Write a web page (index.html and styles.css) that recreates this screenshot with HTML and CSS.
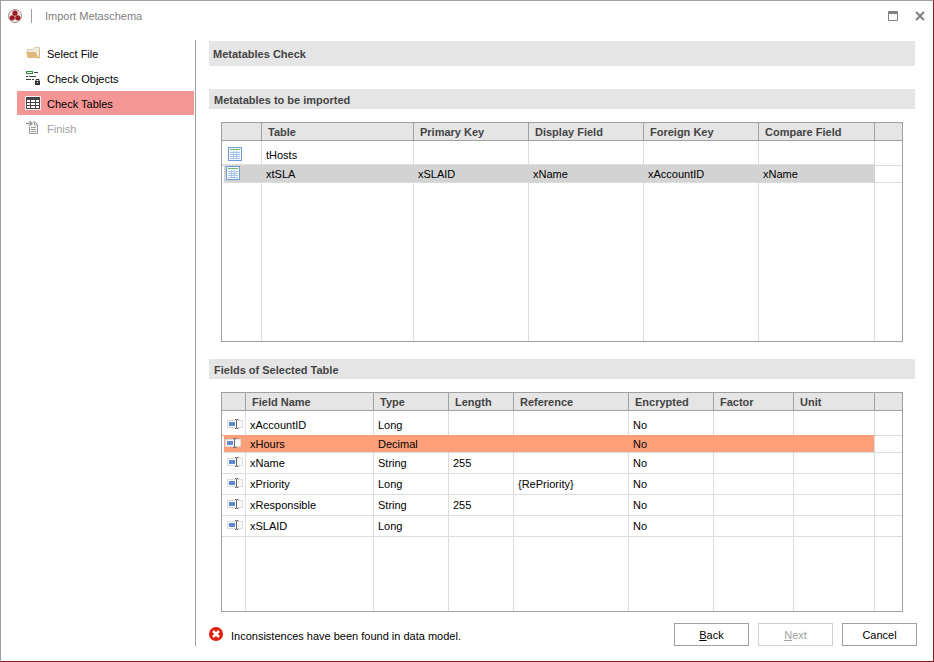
FILE: index.html
```
<!DOCTYPE html>
<html lang="en">
    <head>
        <meta charset="utf-8">
        <title>Import Metaschema</title>
        <link rel="stylesheet" href="styles.css">
    </head>
    <body>
        <!-- shared icons -->
        <svg class="sprite" aria-hidden="true">
            <symbol id="icon-table" viewBox="0 0 14 14">
                <rect x=".5" y=".5" width="13" height="13" fill="#f4f9ff" stroke="#6f9ad6"/>
                <path d="M2 2.5h10" stroke="#70b870"/>
                <path d="M2 5.5h10M2 7.5h10M2 9.500h10M2 11.500h10M5.5 4v8M8.500 4v8" stroke="#a9c4ec"/>
            </symbol>
            <symbol id="icon-field" viewBox="0 0 16 10">
                <rect x=".5" y="1.5" width="15" height="7" fill="#fafafa" stroke="#dcdcdc"/>
                <rect x="2" y="3" width="6" height="4" fill="#5f8bd0"/>
                <path d="M8 .5h1.5M10 .5h1.5M9.5 1v8M8 9.5h1.5M10 9.5h1.5" stroke="#666"/>
            </symbol>
        </svg>
        <div class="window">
            <header class="titlebar">
                <svg class="logo" viewBox="0 0 14 14" aria-hidden="true">
                    <circle cx="7" cy="7" r="6.5" fill="#f2eaea" stroke="#a08c8c"/>
                    <circle cx="7" cy="4.200" r="2.600" fill="#9c1c24"/>
                    <circle cx="4.2" cy="8.8" r="2.600" fill="#9c1c24"/>
                    <circle cx="9.8" cy="8.8" r="2.600" fill="#9c1c24"/>
                </svg>
                <h1>Import Metaschema</h1>
                <button class="win-btn" aria-label="Maximize">
                    <svg width="10" height="10" viewBox="0 0 10 10"><path d="M.5.5h9v9h-9zM0 1.5h10M0 2.500h10" fill="none" stroke="#808080"/></svg>
                </button>
                <button class="win-btn" aria-label="Close">
                    <svg width="10" height="10" viewBox="0 0 10 10"><path d="M1 1l8 8M9 1l-8 8" stroke="#808080" stroke-width="2"/></svg>
                </button>
            </header>
            <div class="content">
                <nav class="steps">
                    <a href="#file">
                        <svg viewBox="0 0 16 16" aria-hidden="true">
                            <path d="M2.5 12V4.500H8l1.500-2h5V12z" fill="#f1ece4" stroke="#d9c8ac"/>
                            <path d="M1 7h10l2 6H3z" fill="#dfb87c"/>
                            <path d="M14.500 3v10H12" fill="none" stroke="#dfb87c"/>
                        </svg>
                        <span>Select File</span>
                    </a>
                    <a href="#objects">
                        <svg viewBox="0 0 16 16" aria-hidden="true">
                            <rect x="1.500" y="1.500" width="6" height="2" fill="#fff" stroke="#2f8f3c"/>
                            <path d="M9 2.500h4M1 6.500h2M4 6.500h7M1 9.500h5M7 9.500h2" stroke="#444"/>
                            <path d="M10 11h5v4h-5z" fill="#333"/>
                            <path d="M11 11V9.500h3V11" fill="none" stroke="#333"/>
                            <path d="M12 12.500h1" stroke="#fff"/>
                        </svg>
                        <span>Check Objects</span>
                    </a>
                    <a href="#tables" class="active">
                        <svg viewBox="0 0 16 16" aria-hidden="true">
                            <path d="M0 1h16v14H0z" fill="#f6eeee"/>
                            <path d="M1 2h14v12H1z" fill="#444"/>
                            <path d="M2 5h3v2H2zM6 5h4v2H6zM11 5h3v2h-3zM2 8h3v2H2zM6 8h4v2H6zM11 8h3v2h-3zM2 11h3v2H2zM6 11h4v2H6zM11 11h3v2h-3z" fill="#fff"/>
                        </svg>
                        <span>Check Tables</span>
                    </a>
                    <a class="disabled">
                        <svg viewBox="0 0 16 16" aria-hidden="true">
                            <path d="M4.500 7v6.500h8v-9L10 2H8" fill="#fafafa" stroke="#999"/>
                            <path d="M1 3.500h5M4.500 1l2.500 2.500L4.500 6" fill="none" stroke="#999" stroke-width="1.500"/>
                            <path d="M6 7.500h5M6 9.500h5M6 11.500h5M9.500 2v3h3" fill="none" stroke="#999"/>
                        </svg>
                        <span>Finish</span>
                    </a>
                </nav>
                <main>
                    <h2 class="page-title">Metatables Check</h2>

                    <h2>Metatables to be imported</h2>
                    <table class="metatables">
                        <colgroup>
                            <col class="w40"><col class="w152"><col class="w115"><col class="w115"><col class="w115"><col><col class="w27">
                        </colgroup>
                        <thead>
                            <tr><th></th><th>Table</th><th>Primary Key</th><th>Display Field</th><th>Foreign Key</th><th>Compare Field</th><th></th></tr>
                        </thead>
                        <tbody>
                            <tr class="first"><td><svg><use href="#icon-table"/></svg></td><td>tHosts</td><td></td><td></td><td></td><td></td><td></td></tr>
                            <tr class="mark selected"><td><svg><use href="#icon-table"/></svg></td><td>xtSLA</td><td>xSLAID</td><td>xName</td><td>xAccountID</td><td>xName</td><td></td></tr>
                            <tr class="rest"><td></td><td></td><td></td><td></td><td></td><td></td><td></td></tr>
                        </tbody>
                    </table>

                    <h2>Fields of Selected Table</h2>
                    <table class="fields">
                        <colgroup>
                            <col class="w24"><col class="w128"><col class="w75"><col class="w65"><col class="w115"><col class="w85"><col class="w80"><col><col class="w27">
                        </colgroup>
                        <thead>
                            <tr><th></th><th>Field Name</th><th>Type</th><th>Length</th><th>Reference</th><th>Encrypted</th><th>Factor</th><th>Unit</th><th></th></tr>
                        </thead>
                        <tbody>
                            <tr class="first"><td><svg><use href="#icon-field"/></svg></td><td>xAccountID</td><td>Long</td><td></td><td></td><td>No</td><td></td><td></td><td></td></tr>
                            <tr class="mark error"><td><svg><use href="#icon-field"/></svg></td><td>xHours</td><td>Decimal</td><td></td><td></td><td>No</td><td></td><td></td><td></td></tr>
                            <tr><td><svg><use href="#icon-field"/></svg></td><td>xName</td><td>String</td><td>255</td><td></td><td>No</td><td></td><td></td><td></td></tr>
                            <tr><td><svg><use href="#icon-field"/></svg></td><td>xPriority</td><td>Long</td><td></td><td>{RePriority}</td><td>No</td><td></td><td></td><td></td></tr>
                            <tr><td><svg><use href="#icon-field"/></svg></td><td>xResponsible</td><td>String</td><td>255</td><td></td><td>No</td><td></td><td></td><td></td></tr>
                            <tr><td><svg><use href="#icon-field"/></svg></td><td>xSLAID</td><td>Long</td><td></td><td></td><td>No</td><td></td><td></td><td></td></tr>
                            <tr class="rest"><td></td><td></td><td></td><td></td><td></td><td></td><td></td><td></td><td></td></tr>
                        </tbody>
                    </table>

                    <footer>
                        <svg viewBox="0 0 14 14" aria-hidden="true">
                            <circle cx="7" cy="7" r="7" fill="#e0200c"/>
                            <path d="M4 4l6 6M10 4l-6 6" stroke="#fff" stroke-width="2.500"/>
                        </svg>
                        <p>Inconsistences have been found in data model.</p>
                        <button class="btn"><u>B</u>ack</button>
                        <button class="btn" disabled><u>N</u>ext</button>
                        <button class="btn">Cancel</button>
                    </footer>
                </main>
            </div>
        </div>
    </body>
</html>
```
FILE: styles.css
```
* {
    box-sizing: border-box;
}
body {
    margin: 0;
    font-family: "Liberation Sans", Arial, sans-serif;
    font-size: 11px;
    line-height: 16px;
    color: #000;
    background-color: #fff;
}
.sprite {
    display: none;
}
.window {
    display: flex;
    flex-direction: column;
    min-height: 100vh;
    border: 1px solid #a0a0a0;
    border-right-color: #8b1a1a;
    border-bottom-color: #8b1a1a;
}

/* Title bar */
.titlebar {
    display: flex;
    align-items: center;
    height: 39px;
    padding: 0 7px 9px 7px;
}
.logo {
    width: 14px;
    height: 14px;
}
.titlebar h1 {
    flex: 1;
    display: flex;
    align-items: center;
    margin: 0 0 0 9px;
    font-size: 11px;
    font-weight: normal;
    color: #808080;
}
.titlebar h1::before {
    content: "";
    height: 14px;
    margin-right: 13px;
    border-left: 1px solid #a0a0a0;
}
.win-btn {
    display: flex;
    margin-left: 15px;
    padding: 1px;
    border: 0;
    background: none;
}

/* Steps */
.content {
    flex: 1;
    display: flex;
    padding-bottom: 15px;
}
.steps {
    width: 195px;
    padding: 1px 1px 0 16px;
    border-right: 1px solid #a0a0a0;
}
.steps a {
    display: flex;
    align-items: center;
    height: 24px;
    margin-bottom: 1px;
    padding-left: 8px;
    color: #000;
    text-decoration: none;
}
.steps svg {
    width: 16px;
    height: 16px;
    margin-right: 6px;
}
.steps span {
    padding-top: 2px;
}
.steps .active {
    background-color: #f59696;
}
.steps .disabled {
    color: #a0a0a0;
}

main {
    flex: 1;
    padding: 1px 16px 0 13px;
}
h2 {
    margin: 0 2px 13px 0;
    padding: 3px 5px 1px;
    font-size: 11px;
    color: #444;
    background-color: #e5e5e5;
}
.page-title {
    margin-bottom: 23px;
    padding: 5px 4px 4px;
}

/* Tables */
table {
    table-layout: fixed;
    width: calc(100% - 26px);
    height: 220px;
    margin: 0 14px 17px 12px;
    border: 1px solid #a0a0a0;
    border-spacing: 0;
}
.w24 { width: 24px; }
.w27 { width: 27px; }
.w40 { width: 40px; }
.w65 { width: 65px; }
.w75 { width: 75px; }
.w80 { width: 80px; }
.w85 { width: 85px; }
.w115 { width: 115px; }
.w128 { width: 128px; }
.w152 { width: 152px; }
th {
    height: 18px;
    padding: 1px 6px 0;
    text-align: left;
    color: #444;
    background-color: #e5e5e5;
    border-right: 1px solid #a0a0a0;
    border-bottom: 1px solid #a0a0a0;
}
td {
    height: 21px;
    padding: 0 4px;
    border-right: 1px solid #dcdcdc;
    border-bottom: 1px solid #dcdcdc;
}
th:last-child, td:last-child {
    border-right: 0;
}
td svg {
    display: block;
}
.first td {
    height: 25px;
    padding-top: 4px;
}
.rest td {
    height: auto;
    border-bottom: 0;
}
.metatables svg {
    width: 14px;
    height: 14px;
    margin-left: 2px;
    margin-top: -2px;
}
.fields svg {
    width: 16px;
    height: 10px;
    margin-left: 1px;
    margin-top: -2px;
}
.mark td {
    height: 17px;
}
.mark td:first-child {
    padding-left: 2px;
}

/* highlighted rows, the band starts a little inside the frame */
.selected td:not(:last-child) {
    background-color: #d3d3d3;
    border-right-color: #d3d3d3;
    box-shadow: 0 -1px 0 #d3d3d3, 0 -2px 0 #e0e0e0;
}
.error td:not(:last-child) {
    background-color: #ffa07a;
    background-clip: padding-box;
    border-right-color: #ffa07a;
    box-shadow: 0 -1px 0 #ffa07a;
}
.mark td:first-child {
    background-clip: padding-box;
    border-left: 2px solid #fff;
    padding-left: 0;
}
.error td:nth-last-child(2) {
    border-right-color: #dcdcdc;
}
.fields {
    margin-bottom: 11px;
}

footer {
    display: flex;
    align-items: center;
}
footer svg {
    width: 14px;
    height: 14px;
    margin-top: -2px;
}
footer p {
    flex: 1;
    margin: 2px 0 0 8px;
}
.btn {
    width: 75px;
    height: 23px;
    margin-left: 9px;
    padding: 0;
    font: inherit;
    color: #000;
    background-color: #fff;
    border: 1px solid #a0a0a0;
}
.btn:disabled {
    color: #a0a0a0;
    border-color: #d0d0d0;
}
```
